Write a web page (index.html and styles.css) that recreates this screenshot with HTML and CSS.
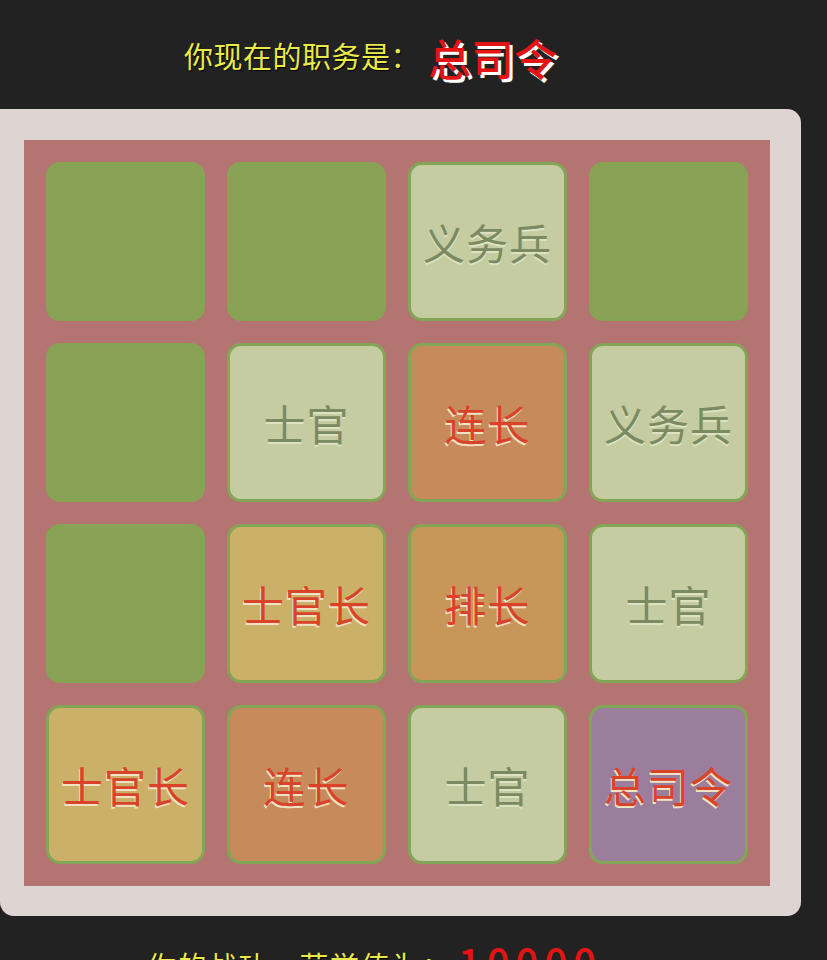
FILE: index.html
```html
<!DOCTYPE html>
<html lang="zh">
<head>
<meta charset="utf-8">
<title>2048 军衔</title>
<link rel="stylesheet" href="styles.css">
</head>
<body>
<div class="page">
  <div class="header">
    <span class="label">你现在的职务是：</span><span class="rank">总司令</span>
  </div>
  <div class="panel">
    <div class="board">
      <div class="tile empty"></div>
      <div class="tile empty"></div>
      <div class="tile t-light">义务兵</div>
      <div class="tile empty"></div>

      <div class="tile empty"></div>
      <div class="tile t-light">士官</div>
      <div class="tile t-orange">连长</div>
      <div class="tile t-light">义务兵</div>

      <div class="tile empty"></div>
      <div class="tile t-yellow">士官长</div>
      <div class="tile t-amber">排长</div>
      <div class="tile t-light">士官</div>

      <div class="tile t-yellow">士官长</div>
      <div class="tile t-orange">连长</div>
      <div class="tile t-light">士官</div>
      <div class="tile t-purple">总司令</div>
    </div>
  </div>
  <div class="footer">
    <span class="label label-foot">你的战功，荣誉值为：</span><span class="score">10000</span>
  </div>
</div>
</body>
</html>
```

FILE: styles.css
```css
html, body {
  margin: 0;
  padding: 0;
  background: #222222;
  font-family: "Noto Sans CJK SC", "Noto Sans", sans-serif;
}

.page {
  width: 827px;
  height: 960px;
  overflow: hidden;
}

.header {
  height: 109px;
  box-sizing: border-box;
  padding-left: 184px;
  display: flex;
  align-items: center;
}

.label {
  color: #e9ea48;
  font-family: "Noto Sans CJK TC", "Noto Sans CJK SC", sans-serif;
  font-size: 29px;
  line-height: 40px;
  letter-spacing: 0.5px;
  text-shadow: 1px 1px 1px #000;
}

.label-foot {
  letter-spacing: 1.5px;
}

.rank {
  color: #e41414;
  font-size: 43px;
  font-weight: 500;
  line-height: 50px;
  text-shadow: 3px 3px 0 #ffffff;
  margin-left: 8px;
  margin-top: 4px;
}

.panel {
  width: 801px;
  box-sizing: border-box;
  background: #ded5d2;
  border-radius: 0 14px 14px 14px;
  padding: 31px 31px 30px 24px;
}

.board {
  width: 746px;
  height: 746px;
  box-sizing: border-box;
  background: #b47472;
  padding: 22px;
  display: grid;
  grid-template-columns: repeat(4, 1fr);
  grid-template-rows: repeat(4, 1fr);
  gap: 22px;
}

.tile {
  border-radius: 14px;
  border: 3px solid #82a656;
  display: flex;
  align-items: center;
  justify-content: center;
  font-size: 42px;
  letter-spacing: 1px;
  color: #d8432a;
  text-shadow: -1px 2px 0 #f0e2c4;
}

.empty {
  background: #89a255;
  border-color: #87a354;
}

.t-light {
  background: #c5cca1;
  color: #7c8a62;
  text-shadow: 0 2px 0 #dde3c0;
}

.t-orange {
  background: #c78a5a;
}

.t-amber {
  background: #c9965a;
}

.t-yellow {
  background: #cbb068;
}

.t-purple {
  background: #9b7e9c;
}

.footer {
  padding-left: 147px;
  padding-top: 20px;
  display: flex;
  align-items: baseline;
}

.score {
  color: #e41414;
  font-size: 40px;
  font-weight: 500;
  line-height: 50px;
  margin-left: 6px;
  letter-spacing: 6px;
}
```
